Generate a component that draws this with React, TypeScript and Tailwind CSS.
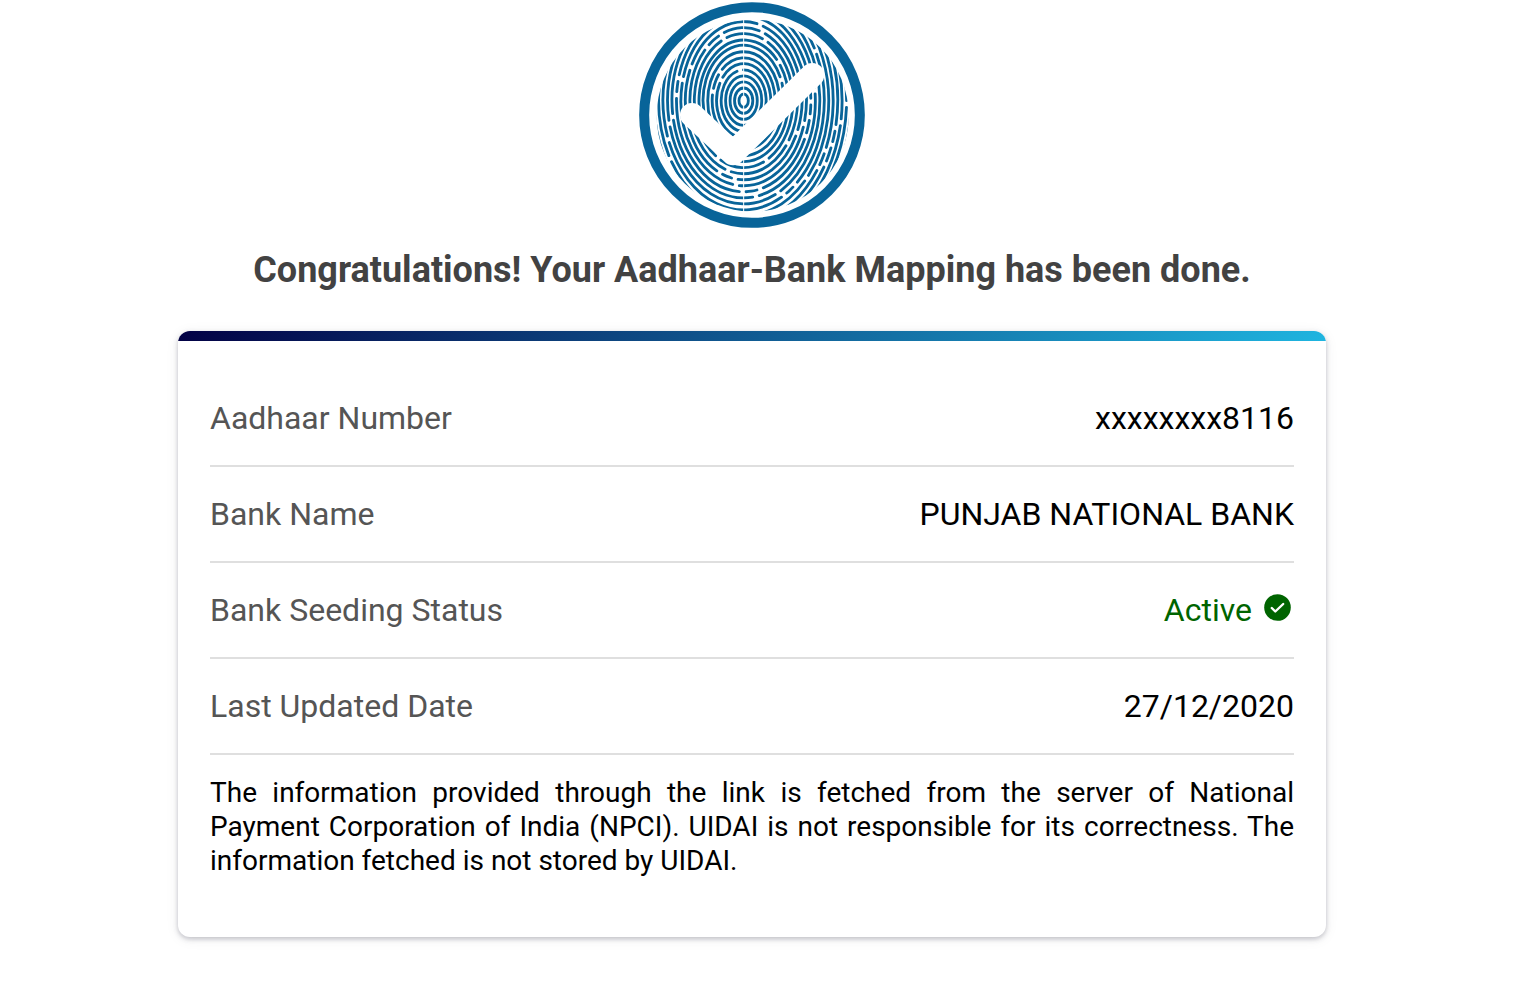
const CX = 335;
const CY = 302;

// Breaks in the fingerprint ridges: x, y of each break.
const BREAKS: [number, number][] = [
  [384, 76], [391, 96], [412, 100], [398, 126], [427, 135], [434, 165], [440, 186], [446, 212], [447, 240],
  [555, 150], [562, 182], [645, 312], [632, 368], [615, 385], [545, 272], [540, 305], [527, 350], [512, 370], [515, 405], [497, 400],
  [605, 437], [585, 455], [577, 490], [558, 502], [540, 535], [520, 530], [510, 560], [487, 550], [455, 582], [435, 570], [372, 590], [385, 570],
  [485, 430], [468, 430], [455, 455], [437, 468], [404, 483], [424, 495], [385, 495],
  [258, 475], [265, 512], [290, 505], [308, 540], [312, 556], [332, 576],
  [112, 478], [105, 440], [115, 415], [118, 352], [108, 372], [124, 315],
  [135, 285], [142, 235], [153, 240], [158, 212], [175, 200], [182, 178], [194, 165], [203, 145], [222, 138], [225, 115], [270, 108], [277, 120], [245, 100],
  [270, 222], [325, 213], [265, 238], [243, 275], [238, 290],
];

const ringRx = (k: number) => 14 + 13.4 * k;
const ringRy = (k: number) => 20 + 18.1 * k;

function ringOf(x: number, y: number) {
  let best = 0;
  let err = Infinity;
  for (let k = 0; k < 25; k++) {
    const e = Math.abs(Math.hypot((x - CX) / ringRx(k), (y - CY) / ringRy(k)) - 1);
    if (e < err) {
      err = e;
      best = k;
    }
  }
  return best;
}

function ridge(k: number) {
  const rx = ringRx(k);
  const ry = ringRy(k);
  const gaps = BREAKS.filter(([x, y]) => ringOf(x, y) === k)
    .filter(([x, y], i, all) => !all.slice(0, i).some(([a, b]) => Math.hypot(a - x, b - y) < 44))
    .map(([x, y]) => {
      const t = Math.atan2((y - CY) / ry, (x - CX) / rx);
      const half = 10 / Math.hypot(rx * Math.sin(t), ry * Math.cos(t));
      return [t - half, t + half];
    })
    .sort((a, b) => a[0] - b[0]);
  const at = (t: number) => `${(CX + rx * Math.cos(t)).toFixed(1)} ${(CY + ry * Math.sin(t)).toFixed(1)}`;
  const arc = (a: number, b: number) => {
    const m = (a + b) / 2;
    return `M${at(a)}A${rx} ${ry} 0 0 1 ${at(m)}A${rx} ${ry} 0 0 1 ${at(b)}`;
  };
  if (!gaps.length) return arc(0, Math.PI) + arc(Math.PI, 2 * Math.PI);
  return gaps
    .map((g, i) => {
      const end = i + 1 < gaps.length ? gaps[i + 1][0] : gaps[0][0] + 2 * Math.PI;
      return end > g[1] ? arc(g[1], end) : "";
    })
    .join("");
}

const RIDGES = Array.from({ length: 25 }, (_, k) => ridge(k));

function FingerprintLogo() {
  return (
    <svg viewBox="0 0 720 696" className="h-[232px] w-[240px]" fill="none" strokeLinecap="round" strokeLinejoin="round">
      <clipPath id="print">
        <circle cx="362" cy="347" r="288" />
      </clipPath>
      <circle cx="360" cy="345" r="323.5" stroke="#086499" strokeWidth="30" />
      <g clipPath="url(#print)" stroke="#086499" strokeWidth="8.5">
        {RIDGES.map((d, k) => (
          <path key={k} d={d} />
        ))}
      </g>
      <path d="M335 55V640" stroke="#fff" strokeWidth="3" />
      <path d="M180 345L303 460L541 225" stroke="#fff" strokeWidth="72" />
    </svg>
  );
}

function ActiveBadge() {
  return (
    <svg viewBox="0 0 27 27" className="mt-[-5px] mr-[3px] ml-3 size-[27px]" fill="none" strokeLinecap="round" strokeLinejoin="round">
      <circle cx="13.5" cy="13.5" r="13.3" fill="#006400" />
      <path d="M7.8 14L11.3 17.5L19.2 10" stroke="#fff" strokeWidth="2.4" />
    </svg>
  );
}

const ROWS = [
  { label: "Aadhaar Number", value: "xxxxxxxx8116" },
  { label: "Bank Name", value: "PUNJAB NATIONAL BANK" },
  { label: "Bank Seeding Status", value: "Active", active: true },
  { label: "Last Updated Date", value: "27/12/2020" },
];

export default function App() {
  return (
    <main className="flex h-[1006px] w-[1504px] flex-col items-center bg-white font-['Roboto',sans-serif] text-black">
      <FingerprintLogo />
      <h1 className="mt-[14px] text-[36px] leading-[48px] font-bold whitespace-nowrap text-[#424242]">
        Congratulations! Your Aadhaar-Bank Mapping has been done.
      </h1>
      <section className="mt-[37px] h-[606px] w-[1148px] overflow-hidden rounded-[12px] bg-white shadow-[0_2px_5px_rgba(50,50,71,0.28),0_2px_14px_rgba(50,50,71,0.07)]">
        <div className="h-[10px] bg-[linear-gradient(135deg,#020044,#1fb5e0)]" />
        <div className="px-8 pt-[30px]">
          {ROWS.map((r) => (
            <div key={r.label} className="flex h-24 items-center justify-between border-b-2 border-[#dfdfdf] text-[32px] whitespace-nowrap">
              <span className="text-[#555]">{r.label}</span>
              {r.active ? (
                <span className="flex items-center text-[#006400]">
                  {r.value}
                  <ActiveBadge />
                </span>
              ) : (
                <span>{r.value}</span>
              )}
            </div>
          ))}
          <p className="mt-[21px] text-justify text-[28px] leading-[34px]">
            The information provided through the link is fetched from the server of National Payment Corporation of India
            (NPCI). UIDAI is not responsible for its correctness. The information fetched is not stored by UIDAI.
          </p>
        </div>
      </section>
    </main>
  );
}
